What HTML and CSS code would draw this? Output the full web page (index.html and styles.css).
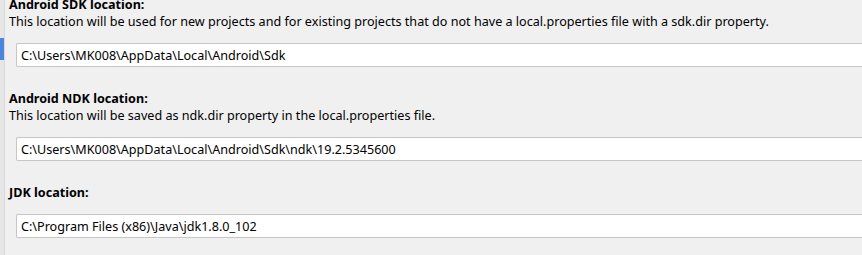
FILE: index.html
```html
<!DOCTYPE html>
<html lang="en">
<head>
  <meta charset="UTF-8" />
  <title>SDK Location</title>
  <link rel="stylesheet" href="styles.css">
</head>
<body>

  <!-- Left edge of the settings tree -->
  <div class="tree-edge">
    <div class="tree-mark"></div>
  </div>

  <!-- Location fields -->
  <div class="settings">
    <div class="field">
      <div class="field-title">Android SDK location:</div>
      <div class="field-hint">This location will be used for new projects and for existing projects that do not have a local.properties file with a sdk.dir property.</div>
      <input class="path-input" type="text" value="C:\Users\MK008\AppData\Local\Android\Sdk">
    </div>

    <div class="field">
      <div class="field-title">Android NDK location:</div>
      <div class="field-hint">This location will be saved as ndk.dir property in the local.properties file.</div>
      <input class="path-input" type="text" value="C:\Users\MK008\AppData\Local\Android\Sdk\ndk\19.2.5345600">
    </div>

    <div class="field">
      <div class="field-title">JDK location:</div>
      <input class="path-input" type="text" value="C:\Program Files (x86)\Java\jdk1.8.0_102">
    </div>
  </div>

</body>
</html>
```

FILE: styles.css
```css
* {
  box-sizing: border-box;
}

html, body {
  height: 100%;
}

body {
  margin: 0;
  font-family: 'Noto Sans', 'Open Sans', sans-serif;
  font-size: 12.6px;
  line-height: 17px;
  color: #000;
  background-color: #f0f0f0;
  display: flex;
  overflow: hidden;
}

/* Left edge */
.tree-edge {
  width: 5px;
  flex-shrink: 0;
  background-color: #e6e6e6;
  border-right: 1px solid #d9d9d9;
}

.tree-mark {
  margin-top: 38px;
  width: 4px;
  height: 22px;
  background-color: #4a86dc;
}

/* Fields */
.settings {
  flex-grow: 1;
  min-width: 0;
  padding-left: 4px;
  margin-top: -4px;
}

.field {
  margin-bottom: 23px;
}

.field-title {
  font-weight: bold;
}

.path-input {
  display: block;
  margin-top: 13px;
  margin-left: 7px;
  width: calc(100% - 7px);
  height: 24px;
  padding: 0 4px;
  font-family: inherit;
  font-size: 12.6px;
  color: #000;
  background-color: #fff;
  border: 1px solid #c6c6c6;
  border-right: none;
  border-radius: 2px 0 0 2px;
  outline: none;
}
```
